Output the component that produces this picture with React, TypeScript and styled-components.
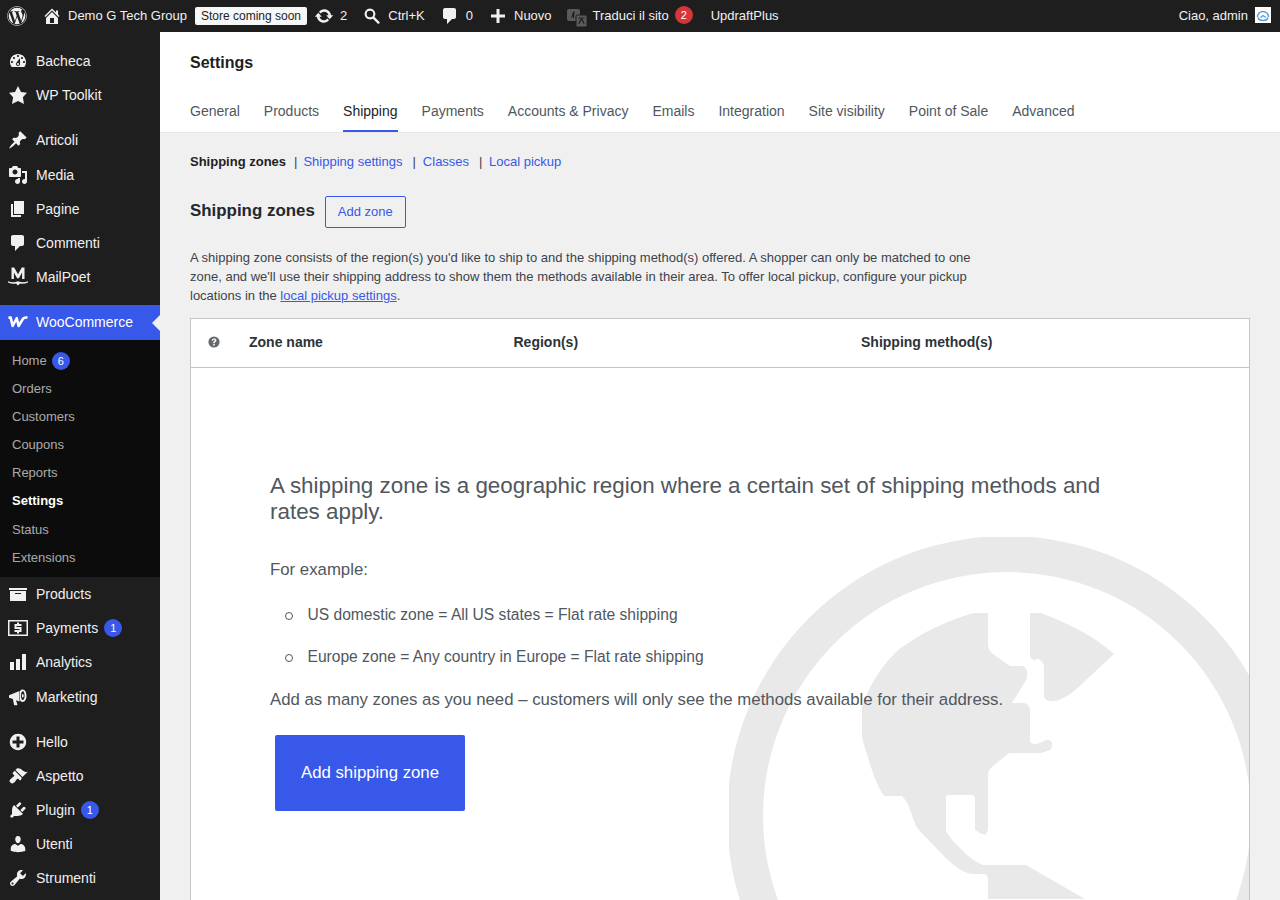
import React from "react"
import styled, { createGlobalStyle } from "styled-components"
import { FaWordpress } from "react-icons/fa"

const GlobalStyle = createGlobalStyle`
  html, body {
    margin: 0;
    padding: 0;
    height: 100%;
    overflow: hidden;
    background: #f0f0f1;
    font-family: "Liberation Sans", Arial, sans-serif;
  }
  * {
    box-sizing: border-box;
  }
`

const Page = styled.div`
  width: 1280px;
  height: 900px;
  overflow: hidden;
  display: flex;
  flex-direction: column;
`

const TopBar = styled.div`
  height: 32px;
  flex: none;
  background: #1e1e1e;
  color: #f0f0f1;
  font-size: 13px;
  display: flex;
  align-items: center;
  justify-content: space-between;
`

const BarGroup = styled.div`
  display: flex;
  align-items: center;
  height: 32px;
`

const BarItem = styled.div<{ $left?: number }>`
  display: flex;
  align-items: center;
  height: 32px;
  padding-bottom: 1px;
  margin-left: ${({ $left }) => $left ?? 0}px;
  gap: 6px;
  white-space: nowrap;
`

const StorePill = styled.span`
  background: #f6f7f7;
  color: #1e1e1e;
  font-size: 12px;
  height: 18px;
  line-height: 18px;
  padding: 0 6px;
  border-radius: 2px;
  margin-left: 8px;
`

const RedBadge = styled.span`
  width: 18px;
  height: 18px;
  border-radius: 9px;
  background: #d63638;
  color: #fff;
  font-size: 11px;
  line-height: 18px;
  text-align: center;
  margin-top: -1px;
`

const Avatar = styled.svg`
  width: 16px;
  height: 16px;
  margin: 0 9px 2px 7px;
  display: block;
`

const Body = styled.div`
  flex: 1;
  display: flex;
  min-height: 0;
`

const Sidebar = styled.nav`
  width: 160px;
  flex: none;
  background: #1e1e1e;
  color: #f0f0f1;
  padding-top: 12px;
`

const MenuRow = styled.div<{ $active?: boolean; $gapTop?: boolean }>`
  position: relative;
  display: flex;
  align-items: center;
  height: ${({ $active }) => ($active ? 35 : 34.2)}px;
  margin-top: ${({ $gapTop }) => ($gapTop ? 11 : 0)}px;
  padding-bottom: ${({ $active }) => ($active ? 1 : 0)}px;
  background: ${({ $active }) => ($active ? "#3858e9" : "transparent")};
  color: ${({ $active }) => ($active ? "#fff" : "#f0f0f1")};
  font-size: 14px;

  ${({ $active }) =>
    $active
      ? `
    &::after {
      content: "";
      position: absolute;
      right: 0;
      top: 50%;
      margin-top: -8px;
      border: 8px solid transparent;
      border-right-color: #f0f0f1;
      border-left-width: 0;
    }
  `
      : ""}
`

const MenuIcon = styled.span`
  width: 36px;
  flex: none;
  display: flex;
  justify-content: center;
`

const CountBadge = styled.span`
  display: inline-block;
  min-width: 18px;
  height: 18px;
  border-radius: 9px;
  background: #3858e9;
  color: #fff;
  font-size: 11px;
  line-height: 18px;
  text-align: center;
  margin-left: 6px;
`

const SubMenu = styled.div`
  background: #0c0c0c;
  padding: 6.2px 0 4.9px;
`

const SubItem = styled.div<{ $current?: boolean }>`
  height: 28.2px;
  padding: 5px 12px;
  font-size: 13px;
  line-height: 18.2px;
  font-weight: ${({ $current }) => ($current ? 700 : 400)};
  color: ${({ $current }) => ($current ? "#fff" : "rgba(240, 240, 241, 0.7)")};
  display: flex;
  align-items: center;

  ${CountBadge} {
    margin-left: 5px;
    margin-top: 1px;
  }
`

const Main = styled.main`
  flex: 1;
  min-width: 0;
`

const Header = styled.header`
  background: #fff;
  height: 101px;
  padding: 0 30px;
  border-bottom: 1px solid #e8e8e8;
  display: flex;
  flex-direction: column;
  justify-content: space-between;
`

const PageTitle = styled.h1`
  margin: 20px 0 0;
  padding-top: 1px;
  font-size: 16px;
  line-height: 20px;
  font-weight: 700;
  color: #1e1e1e;
`

const Tabs = styled.div`
  display: flex;
  gap: 24px;
`

const Tab = styled.div<{ $active?: boolean }>`
  font-size: 14px;
  line-height: 18px;
  height: 42px;
  padding-top: 12px;
  color: ${({ $active }) => ($active ? "#1e1e1e" : "#50575e")};
  border-bottom: 2px solid ${({ $active }) => ($active ? "#3858e9" : "transparent")};
`

const Content = styled.div`
  padding: 20px 30px 0;
`

const SubNav = styled.div`
  display: flex;
  font-size: 13px;
  line-height: 18px;
  color: #3c434a;
`

const SubNavCurrent = styled.span`
  font-weight: 700;
  color: #1e1e1e;
`

const SubNavLink = styled.span`
  color: #3858e9;
`

const SubNavBar = styled.span<{ $left: number; $right: number }>`
  margin: 0 ${({ $right }) => $right}px 0 ${({ $left }) => $left}px;
`

const SectionHead = styled.div`
  display: flex;
  align-items: center;
  gap: 10px;
  margin-top: 25px;
  height: 32px;
`

const SectionTitle = styled.h2`
  margin: 0 0 2px;
  font-size: 16.9px;
  font-weight: 700;
  color: #23282d;
`

const OutlineButton = styled.button`
  height: 32px;
  width: 81px;
  padding: 0 0 2px;
  background: transparent;
  border: 1px solid #3858e9;
  border-radius: 2px;
  color: #3858e9;
  font: 13px "Liberation Sans", Arial, sans-serif;
`

const Intro = styled.p`
  margin: 20px 0 0;
  width: 800px;
  font-size: 13px;
  line-height: 19px;
  color: #3c434a;

  a {
    color: #3858e9;
    text-decoration: underline;
  }
`

const ZoneTable = styled.div`
  margin-top: 13px;
  background: #fff;
  border: 1px solid #c3c4c7;
  height: 640px;
  display: flex;
  flex-direction: column;
`

const TableHead = styled.div`
  height: 49px;
  flex: none;
  padding-bottom: 2px;
  border-bottom: 1px solid #c3c4c7;
  display: grid;
  grid-template-columns: 58px 264.5px 347.5px 1fr;
  align-items: center;
  font-size: 14px;
  font-weight: 700;
  color: #2c3338;
`

const HelpCell = styled.div`
  display: flex;
  padding-left: 14.5px;
  color: #646970;
`

const BlankState = styled.div`
  position: relative;
  flex: 1;
  overflow: hidden;
  padding: 105px 79px 0;
  color: #50575e;
`

const Globe = styled.svg`
  position: absolute;
  left: 538px;
  top: 169px;
  width: 560px;
  height: 560px;
  fill: #e9e9e9;
`

const BlankInner = styled.div`
  position: relative;
`

const BlankTitle = styled.h2`
  margin: 0;
  max-width: 860px;
  font-size: 22.4px;
  line-height: 26px;
  font-weight: 400;
  color: #50575e;
`

const BlankLead = styled.p`
  margin: 33px 0 0;
  font-size: 16.8px;
  line-height: 24px;
`

const BlankList = styled.ul`
  margin: 12px 0 0;
  padding: 0;
  list-style: none;
`

const BlankListItem = styled.li`
  position: relative;
  height: 42px;
  padding-left: 37.5px;
  font-size: 15.6px;
  line-height: 42px;

  &::before {
    content: "";
    position: absolute;
    left: 14.5px;
    top: 18px;
    width: 6px;
    height: 6px;
    border: 1px solid #50575e;
    border-radius: 50%;
  }
`

const BlankNote = styled.p`
  margin: 10px 0 0;
  font-size: 16.8px;
  line-height: 24px;
  white-space: nowrap;
`

const PrimaryButton = styled.button`
  display: block;
  margin: 23px 0 0 5px;
  width: 190px;
  height: 76px;
  border: 0;
  border-radius: 2px;
  background: #3858e9;
  color: #fff;
  font: 16.8px "Liberation Sans", Arial, sans-serif;
`

const paths: Record<string, string> = {
  dashboard:
    "M3.76 16h12.48c1.1-1.37 1.76-3.11 1.76-5 0-4.42-3.58-8-8-8s-8 3.58-8 8c0 1.89.66 3.63 1.76 5zM10 4c.55 0 1 .45 1 1s-.45 1-1 1-1-.45-1-1 .45-1 1-1zM6 6c.55 0 1 .45 1 1s-.45 1-1 1-1-.45-1-1 .45-1 1-1zm8 0c.55 0 1 .45 1 1s-.45 1-1 1-1-.45-1-1 .45-1 1-1zm-5.37 5.55L12 7v6c0 1.1-.9 2-2 2s-2-.9-2-2c0-.57.24-1.08.63-1.45zM4 10c.55 0 1 .45 1 1s-.45 1-1 1-1-.45-1-1 .45-1 1-1zm12 0c.55 0 1 .45 1 1s-.45 1-1 1-1-.45-1-1 .45-1 1-1zm-5 3c0-.55-.45-1-1-1s-1 .45-1 1 .45 1 1 1 1-.45 1-1z",
  star: "m10 1 3 6 6 .75-4.12 4.62L16 19l-6-3-6 3 1.13-6.63L1 7.75 7 7z",
  pin: "M10.44 3.02l1.82-1.82 6.36 6.35-1.83 1.82c-1.05-.68-2.48-.57-3.41.36l-.75.75c-.92.93-1.04 2.35-.35 3.41l-1.83 1.82-2.41-2.41-2.8 2.79c-.42.42-3.38 2.71-3.8 2.29s1.86-3.39 2.28-3.81l2.79-2.79L4.1 9.36l1.83-1.82c1.05.69 2.48.57 3.4-.36l.75-.75c.93-.92 1.05-2.35.36-3.41z",
  media:
    "M13 11V4c0-.55-.45-1-1-1h-1.67L9 1H5L3.67 3H2c-.55 0-1 .45-1 1v7c0 .55.45 1 1 1h10c.55 0 1-.45 1-1zM7 4.5c1.38 0 2.5 1.12 2.5 2.5S8.38 9.5 7 9.5 4.5 8.38 4.5 7 5.62 4.5 7 4.5zM14 6h5v10.5c0 1.38-1.12 2.5-2.5 2.5S14 17.88 14 16.5s1.12-2.5 2.5-2.5c.17 0 .34.02.5.05V8h-3V6zm-4 8.05V13h2v3.5c0 1.38-1.12 2.5-2.5 2.5S7 17.88 7 16.5 8.12 14 9.5 14c.17 0 .34.02.5.05z",
  page: "M6 15V2h10v13H6zm-1 1h8v2H3V5h2v11z",
  comment: "M5 2h9c1.1 0 2 .9 2 2v7c0 1.1-.9 2-2 2h-2l-5 5v-5H5c-1.1 0-2-.9-2-2V4c0-1.1.9-2 2-2z",
  archive: "M19 4v2H1V4h18zM2 7h16v10H2V7zm11 3V9H7v1h6z",
  chart: "M18 18V2h-4v16h4zm-6 0V7H8v11h4zm-6 0v-8H2v8h4z",
  plusAlt:
    "M15.8 4.2c3.2 3.21 3.2 8.39 0 11.6-3.21 3.2-8.39 3.2-11.6 0C1 12.59 1 7.41 4.2 4.2 7.41 1 12.59 1 15.8 4.2zm-4.3 11.3v-4h4v-3h-4v-4h-3v4h-4v3h4v4h3z",
  brush:
    "M14.48 11.06L7.41 3.99l1.5-1.5c.5-.56 2.3-.47 3.51.32 1.21.8 1.43 1.28 2.91 2.1 1.18.64 2.45 1.26 4.45.85zm-.71.71L6.7 4.7 4.93 6.47c-.39.39-.39 1.02 0 1.41l1.06 1.06c.39.39.39 1.03 0 1.42-.6.6-1.43 1.11-2.21 1.69-.35.26-.7.53-1.01.84C1.43 13.71.96 15.17 2.39 16.6c1.42 1.42 2.87.95 4.15-.33.3-.3.58-.65.84-1.01.58-.77 1.09-1.6 1.69-2.21.39-.39 1.02-.39 1.41 0l1.06 1.06c.39.39 1.02.39 1.41 0z",
  plugin:
    "M13.11 4.36L9.87 7.6 8 5.73l3.24-3.24c.35-.34 1.05-.2 1.56.32.52.51.66 1.21.31 1.55zm-8 1.77l.91-1.12 9.01 9.01-1.19.84c-.71.71-2.63 1.16-3.82 1.16H6.14L4.9 17.26c-.59.59-1.54.59-2.12 0-.59-.58-.59-1.53 0-2.12l1.24-1.24v-3.88c0-1.13.4-3.19 1.09-3.89zm7.26 3.97l3.24-3.24c.34-.35 1.04-.21 1.55.31.52.51.66 1.21.31 1.55l-3.24 3.25z",
  users:
    "M10 9.25c-2.27 0-2.73-3.44-2.73-3.44C7 4.02 7.82 2 9.97 2c2.16 0 2.98 2.02 2.71 3.81 0 0-.41 3.44-2.68 3.44zm0 2.57L12.72 10c2.39 0 4.52 2.33 4.52 4.53v2.49s-3.65 1.13-7.24 1.13c-3.65 0-7.24-1.13-7.24-1.13v-2.49c0-2.25 1.94-4.48 4.47-4.48z",
  tools:
    "M16.68 9.77c-1.34 1.34-3.3 1.67-4.95.99l-5.41 6.52c-.99.99-2.59.99-3.58 0s-.99-2.59 0-3.57l6.52-5.42c-.68-1.65-.35-3.61.99-4.95 1.28-1.28 3.12-1.62 4.72-1.06l-2.89 2.89 2.82 2.82 2.86-2.87c.53 1.58.18 3.39-1.08 4.65zM3.81 16.21c.4.39 1.04.39 1.43 0 .4-.4.4-1.04 0-1.43-.39-.4-1.03-.4-1.43 0-.39.39-.39 1.03 0 1.43z",
  home: "M16 8.5l1.53 1.53-1.06 1.06L10 4.62l-6.47 6.47-1.06-1.06L10 2.5l4 4v-2h2v4zm-6-2.46l6 5.99V18H4v-5.97zM12 17v-5H8v5h4z",
  update:
    "M10.2 3.28c3.53 0 6.43 2.61 6.92 6h2.08l-3.5 4-3.5-4h2.32c-.45-1.97-2.21-3.45-4.32-3.45-1.45 0-2.73.71-3.54 1.78L4.95 5.66C6.23 4.2 8.11 3.28 10.2 3.28zm-.4 13.44c-3.52 0-6.43-2.61-6.92-6H.8l3.5-4c1.17 1.33 2.33 2.67 3.5 4H5.48c.45 1.97 2.21 3.45 4.32 3.45 1.45 0 2.73-.71 3.54-1.78l1.71 1.95c-1.28 1.46-3.15 2.38-5.25 2.38z",
  plus: "M17 8.5v3h-5.5V17h-3v-5.5H3v-3h5.5V3h3v5.5H17z",
  search:
    "M8 2.5a5.5 5.5 0 0 1 4.6 8.5l4.7 4.7a1.2 1.2 0 0 1-1.7 1.7l-4.7-4.7A5.5 5.5 0 1 1 8 2.5zm0 2.2a3.3 3.3 0 1 0 0 6.6 3.3 3.3 0 0 0 0-6.6z",
  money:
    "M0 2h20v16H0V2zm1.5 1.5v13h17v-13h-17zM6.5 6h7v1.9h-5v1.2h5V14h-7v-1.9h5v-1.2h-5V6zM9 4.6h2V6H9V4.6zM9 14h2v1.4H9V14z",
  megaphone:
    "M1 8.2 11.5 4v10.5L8 13.2l1.4 4.3c.1.4-.2.7-.5.7H6.6c-.3 0-.5-.2-.6-.5L4.9 12 1 10.8V8.2zM14.7 2.5c2.2 0 3.8 2.8 3.8 6.2s-1.6 6.2-3.8 6.2c-1.2 0-2.2-.6-2.7-1.6V4.1c.5-1 1.5-1.6 2.7-1.6zm.1 1.8c-1 0-1.8 2-1.8 4.4s.8 4.4 1.8 4.4 1.8-2 1.8-4.4-.8-4.4-1.8-4.4zm0 2.6c.5 0 .9.8.9 1.8s-.4 1.8-.9 1.8-.9-.8-.9-1.8.4-1.8.9-1.8z",
  mailpoet:
    "M3.5.5h2.7L10 7.2 13.8.5h2.7V12h-2.4V5.6l-3.2 5.6H9.1L5.9 5.6V12H3.5V.5zM0 14.2c3 1.5 7 1.5 10 0 3 1.5 7 1.5 10 0v1.4c-2.6 1.2-5.5 1.4-8 1l-2 1.9-2-1.9c-2.5.4-5.4.2-8-1v-1.4z",
  help:
    "M10 3a7 7 0 1 1 0 14 7 7 0 0 1 0-14zm.9 9.3H9v2h1.9v-2zM10.1 5.5c-1.7 0-2.9.9-3 2.6H9c0-.7.4-1.1 1-1.1s1 .3 1 .9c0 .5-.3.8-.9 1.2-.8.5-1.1 1-1.1 2.1h1.8c0-.6.2-.9.8-1.3.9-.6 1.4-1.2 1.4-2.2 0-1.4-1.2-2.2-2.9-2.2z",
}

const Dash: React.FC<{ name: string; size?: number }> = ({ name, size = 20 }) => (
  <svg width={size} height={size} viewBox="0 0 20 20" fill="currentColor" style={{ display: "block" }}>
    <path d={paths[name]} fillRule="evenodd" />
  </svg>
)

const WooLogo = () => (
  <svg width="20" height="12" viewBox="0 0 20 12" fill="none" stroke="currentColor" style={{ display: "block" }}>
    <path d="M.5 1.6h2.2L4.6 10 8.8 2.2 10.6 10 15 2.8c1-1.4 2.4-1.6 4.5-1.2" strokeWidth="2.6" strokeLinejoin="round" />
  </svg>
)

const TranslateIcon = () => (
  <svg width="20" height="20" viewBox="0 0 20 20" style={{ display: "block", marginTop: 5 }}>
    <rect x="0" y="1" width="13" height="12" rx="2" fill="#5a5a5a" />
    <path d="M4 10 6.2 3.5h1.4L7 10H5.6l.2-1.5H5l-.5 1.5z" fill="#1e1e1e" />
    <rect x="9" y="7" width="11" height="12" rx="1.5" fill="#5a5a5a" stroke="#1e1e1e" />
    <path d="M11.5 9.5h6v1h-2.4l2.6 5-1 .5-2.2-4-2.2 4-1-.5 2.6-5h-2.4z" fill="#1e1e1e" />
  </svg>
)

type Item = { icon: string; label: string; badge?: string; gapTop?: boolean }

const topMenu: Item[] = [
  { icon: "dashboard", label: "Bacheca" },
  { icon: "star", label: "WP Toolkit" },
  { icon: "pin", label: "Articoli", gapTop: true },
  { icon: "media", label: "Media" },
  { icon: "page", label: "Pagine" },
  { icon: "comment", label: "Commenti" },
  { icon: "mailpoet", label: "MailPoet" },
]

const bottomMenu: Item[] = [
  { icon: "archive", label: "Products" },
  { icon: "money", label: "Payments", badge: "1" },
  { icon: "chart", label: "Analytics" },
  { icon: "megaphone", label: "Marketing" },
  { icon: "plusAlt", label: "Hello", gapTop: true },
  { icon: "brush", label: "Aspetto" },
  { icon: "plugin", label: "Plugin", badge: "1" },
  { icon: "users", label: "Utenti" },
  { icon: "tools", label: "Strumenti" },
]

const subItems = ["Orders", "Customers", "Coupons", "Reports"]
const tabs = [
  "General",
  "Products",
  "Shipping",
  "Payments",
  "Accounts & Privacy",
  "Emails",
  "Integration",
  "Site visibility",
  "Point of Sale",
  "Advanced",
]

const Row: React.FC<{ item: Item }> = ({ item }) => (
  <MenuRow $gapTop={item.gapTop}>
    <MenuIcon>
      <Dash name={item.icon} />
    </MenuIcon>
    {item.label}
    {item.badge && <CountBadge>{item.badge}</CountBadge>}
  </MenuRow>
)

export default function App() {
  return (
    <Page>
      <GlobalStyle />
      <TopBar>
        <BarGroup>
          <BarItem $left={7}>
            <FaWordpress size={20} />
          </BarItem>
          <BarItem $left={15}>
            <Dash name="home" />
            Demo G Tech Group
          </BarItem>
          <StorePill>Store coming soon</StorePill>
          <BarItem $left={7}>
            <Dash name="update" />
            2
          </BarItem>
          <BarItem $left={15}>
            <Dash name="search" />
            Ctrl+K
          </BarItem>
          <BarItem $left={15}>
            <Dash name="comment" />
            0
          </BarItem>
          <BarItem $left={15}>
            <Dash name="plus" />
            Nuovo
          </BarItem>
          <BarItem $left={15}>
            <TranslateIcon />
            Traduci il sito
            <RedBadge>2</RedBadge>
          </BarItem>
          <BarItem $left={18}>UpdraftPlus</BarItem>
        </BarGroup>
        <BarGroup>
          <BarItem>Ciao, admin</BarItem>
          <Avatar viewBox="0 0 16 16">
            <rect width="16" height="16" fill="#fff" />
            <path
              d="M2.5 10a5.5 5.5 0 0 1 11 0M5.5 10.5 8 8.5l3 2M3 10.5c.5 2 2 3 5 3s4.5-1 5-3"
              fill="none"
              stroke="#5a9bd8"
              strokeWidth="1.4"
            />
          </Avatar>
        </BarGroup>
      </TopBar>
      <Body>
        <Sidebar>
          {topMenu.map((item) => (
            <Row key={item.label} item={item} />
          ))}
          <MenuRow $active $gapTop>
            <MenuIcon>
              <WooLogo />
            </MenuIcon>
            WooCommerce
          </MenuRow>
          <SubMenu>
            <SubItem>
              Home<CountBadge>6</CountBadge>
            </SubItem>
            {subItems.map((s) => (
              <SubItem key={s}>{s}</SubItem>
            ))}
            <SubItem $current>Settings</SubItem>
            <SubItem>Status</SubItem>
            <SubItem>Extensions</SubItem>
          </SubMenu>
          {bottomMenu.map((item) => (
            <Row key={item.label} item={item} />
          ))}
        </Sidebar>
        <Main>
          <Header>
            <PageTitle>Settings</PageTitle>
            <Tabs>
              {tabs.map((t) => (
                <Tab key={t} $active={t === "Shipping"}>
                  {t}
                </Tab>
              ))}
            </Tabs>
          </Header>
          <Content>
            <SubNav>
              <SubNavCurrent>Shipping zones</SubNavCurrent>
              <SubNavBar $left={8} $right={6}>|</SubNavBar>
              <SubNavLink>Shipping settings</SubNavLink>
              <SubNavBar $left={10} $right={7}>|</SubNavBar>
              <SubNavLink>Classes</SubNavLink>
              <SubNavBar $left={10} $right={6.5}>|</SubNavBar>
              <SubNavLink>Local pickup</SubNavLink>
            </SubNav>
            <SectionHead>
              <SectionTitle>Shipping zones</SectionTitle>
              <OutlineButton>Add zone</OutlineButton>
            </SectionHead>
            <Intro>
              A shipping zone consists of the region(s) you'd like to ship to and the shipping method(s) offered. A
              shopper can only be matched to one zone, and we'll use their shipping address to show them the methods
              available in their area. To offer local pickup, configure your pickup locations in the{" "}
              <a>local pickup settings</a>.
            </Intro>
            <ZoneTable>
              <TableHead>
                <HelpCell>
                  <Dash name="help" size={16} />
                </HelpCell>
                <div>Zone name</div>
                <div>Region(s)</div>
                <div>Shipping method(s)</div>
              </TableHead>
              <BlankState>
                <Globe viewBox="729 538 560 560">
                  <path
                    fillRule="evenodd"
                    d="M1007 537a280 280 0 1 1 0 560 280 280 0 0 1 0-560zm0 36a244 244 0 1 0 0 488 244 244 0 0 0 0-488z"
                  />
                  <path d="M974 614H988V645Q988 651 993 655L1010 667H1022Q1027 668 1027 673Q1028 679 1025 683L1012 704H1024Q1030 705 1030 712V742Q1031 745 1035 745Q1039 745 1046 741Q1052 741 1052 745Q1052 750 1050 751L1041 754H1009L993 767Q988 771 988 775V830Q988 833 985 836Q979 834 975 831V800Q975 796 971 796H948Q946 796 946 798V832Q951 841 959 848Q969 860 983 866H1026L1085 900H988V880Q988 875 983 875H972Q966 875 955 867Q946 860 937 850L918 830Q914 824 911 813Q907 802 902 797H885Q881 795 874 777Q867 757 862 738V707C868 690 880 668 896 653C915 637 945 622 974 614Z" />
                  <path d="M1030 614H1041Q1060 621 1081 632Q1098 641 1114 655L1085 682Q1071 696 1063 699Q1055 703 1050 702Q1044 701 1044 696V668Q1044 664 1039 660Q1035 659 1035 661Q1031 661 1030 657Z" />
                </Globe>
                <BlankInner>
                  <BlankTitle>
                    A shipping zone is a geographic region where a certain set of shipping methods and rates apply.
                  </BlankTitle>
                  <BlankLead>For example:</BlankLead>
                  <BlankList>
                    <BlankListItem>US domestic zone = All US states = Flat rate shipping</BlankListItem>
                    <BlankListItem>Europe zone = Any country in Europe = Flat rate shipping</BlankListItem>
                  </BlankList>
                  <BlankNote>
                    Add as many zones as you need – customers will only see the methods available for their address.
                  </BlankNote>
                  <PrimaryButton>Add shipping zone</PrimaryButton>
                </BlankInner>
              </BlankState>
            </ZoneTable>
          </Content>
        </Main>
      </Body>
    </Page>
  )
}
